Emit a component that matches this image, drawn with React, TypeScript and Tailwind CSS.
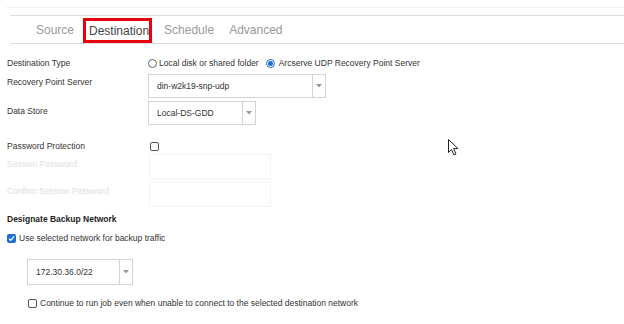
import React from "react";

const TABS = ["Source", "Destination", "Schedule", "Advanced"] as const;

function Radio({ checked }: { checked?: boolean }) {
  return (
    <span
      className={[
        "inline-flex h-[9px] w-[9px] shrink-0 items-center justify-center rounded-full border",
        checked ? "border-[#1a6fd6]" : "border-[#666]",
      ].join(" ")}
    >
      {checked && <span className="h-[5px] w-[5px] rounded-full bg-[#1a6fd6]" />}
    </span>
  );
}

function Checkbox({ checked }: { checked?: boolean }) {
  if (checked) {
    return (
      <span className="inline-flex h-[9px] w-[9px] shrink-0 items-center justify-center rounded-[2px] bg-[#1a6fd6]">
        <svg width="7" height="7" viewBox="0 0 8 8">
          <path d="M1.2 4.2 L3.2 6.1 L6.9 1.6" fill="none" stroke="#fff" strokeWidth="1.5" />
        </svg>
      </span>
    );
  }
  return <span className="inline-block h-[9px] w-[9px] shrink-0 rounded-[2px] border border-[#555]" />;
}

function Select({ value, width }: { value: string; width: string }) {
  return (
    <div className={["flex h-full border border-[#d4d4d4] bg-white", width].join(" ")}>
      <div className="flex flex-1 items-center pl-[8px] text-[#333]">{value}</div>
      <div className="flex w-[13px] items-center justify-center border-l border-[#d4d4d4]">
        <svg width="6" height="4" viewBox="0 0 6 4">
          <path d="M0 0 L6 0 L3 3.5 Z" fill="#999" />
        </svg>
      </div>
    </div>
  );
}

export default function App() {
  return (
    <div
      className="relative h-[324px] w-[624px] overflow-hidden bg-white text-[8.5px] leading-[12px] text-[#333]"
      style={{ fontFamily: '"Liberation Sans", Arial, sans-serif' }}
    >
      {/* 上部の区切り線 */}
      <div className="ml-[6px] mt-[7px] h-px bg-[#f0f0f0]" />
      <div className="ml-[10px] mt-[7px] flex h-[29px] items-center gap-[15px] border-y border-[#dcdcdc] pl-[26px] text-[12px]">
        {TABS.map((tab) =>
          tab === "Destination" ? (
            <div
              key={tab}
              className="-ml-[6px] -mr-[3px] mt-[2px] flex h-[25px] items-center border-[3px] border-[#e8000b] pl-[3px] text-[#444]"
            >
              {tab}
            </div>
          ) : (
            <div key={tab} className="text-[#9a9a9a]">
              {tab}
            </div>
          )
        )}
      </div>

      {/* フォーム */}
      <div className="flex flex-col pl-[7px]">
        <div className="mt-[11px] flex h-[16px] items-center">
          <div className="w-[141px]">Destination Type</div>
          <Radio />
          <span className="ml-[2px] mr-[7px]">Local disk or shared folder</span>
          <Radio checked />
          <span className="ml-[4px]">Arcserve UDP Recovery Point Server</span>
        </div>

        <div className="mt-[3px] flex h-[24px]">
          <div className="w-[141px] pt-[2px]">Recovery Point Server</div>
          <Select value="din-w2k19-snp-udp" width="w-[178px]" />
        </div>

        <div className="mt-[3px] flex h-[24px]">
          <div className="w-[141px] pt-[4px]">Data Store</div>
          <Select value="Local-DS-GDD" width="w-[108px]" />
        </div>

        <div className="mt-[14px] flex h-[14px] items-center">
          <div className="w-[143px]">Password Protection</div>
          <Checkbox />
        </div>

        <div className="mt-[1px] flex h-[25px]">
          <div className="w-[142px] pt-[4px] text-[#dedede]">Session Password</div>
          <div className="w-[122px] border border-[#f3f3f3]" />
        </div>

        <div className="mt-[3px] flex h-[25px]">
          <div className="w-[142px] pt-[3px] text-[#dedede]">Confirm Session Password</div>
          <div className="w-[122px] border border-[#f3f3f3]" />
        </div>

        <div className="mt-[5px] flex h-[14px] items-center font-bold text-[#222]">Designate Backup Network</div>

        <div className="mt-[5px] flex h-[14px] items-center">
          <Checkbox checked />
          <span className="ml-[3px]">Use selected network for backup traffic</span>
        </div>

        <div className="ml-[20px] mt-[14px] h-[26px]">
          <Select value="172.30.36.0/22" width="w-[106px]" />
        </div>

        <div className="ml-[21px] mt-[11px] flex h-[14px] items-center">
          <Checkbox />
          <span className="ml-[3px]">Continue to run job even when unable to connect to the selected destination network</span>
        </div>
      </div>

      {/* マウスカーソル */}
      <svg className="absolute left-[448px] top-[139px]" width="12" height="18" viewBox="0 0 12 18">
        <path d="M0.5 0.5 L0.5 13.5 L3.5 10.5 L6 16 L8 15 L5.6 9.6 L10 9.6 Z" fill="#fff" stroke="#222" strokeWidth="1" />
      </svg>
    </div>
  );
}
